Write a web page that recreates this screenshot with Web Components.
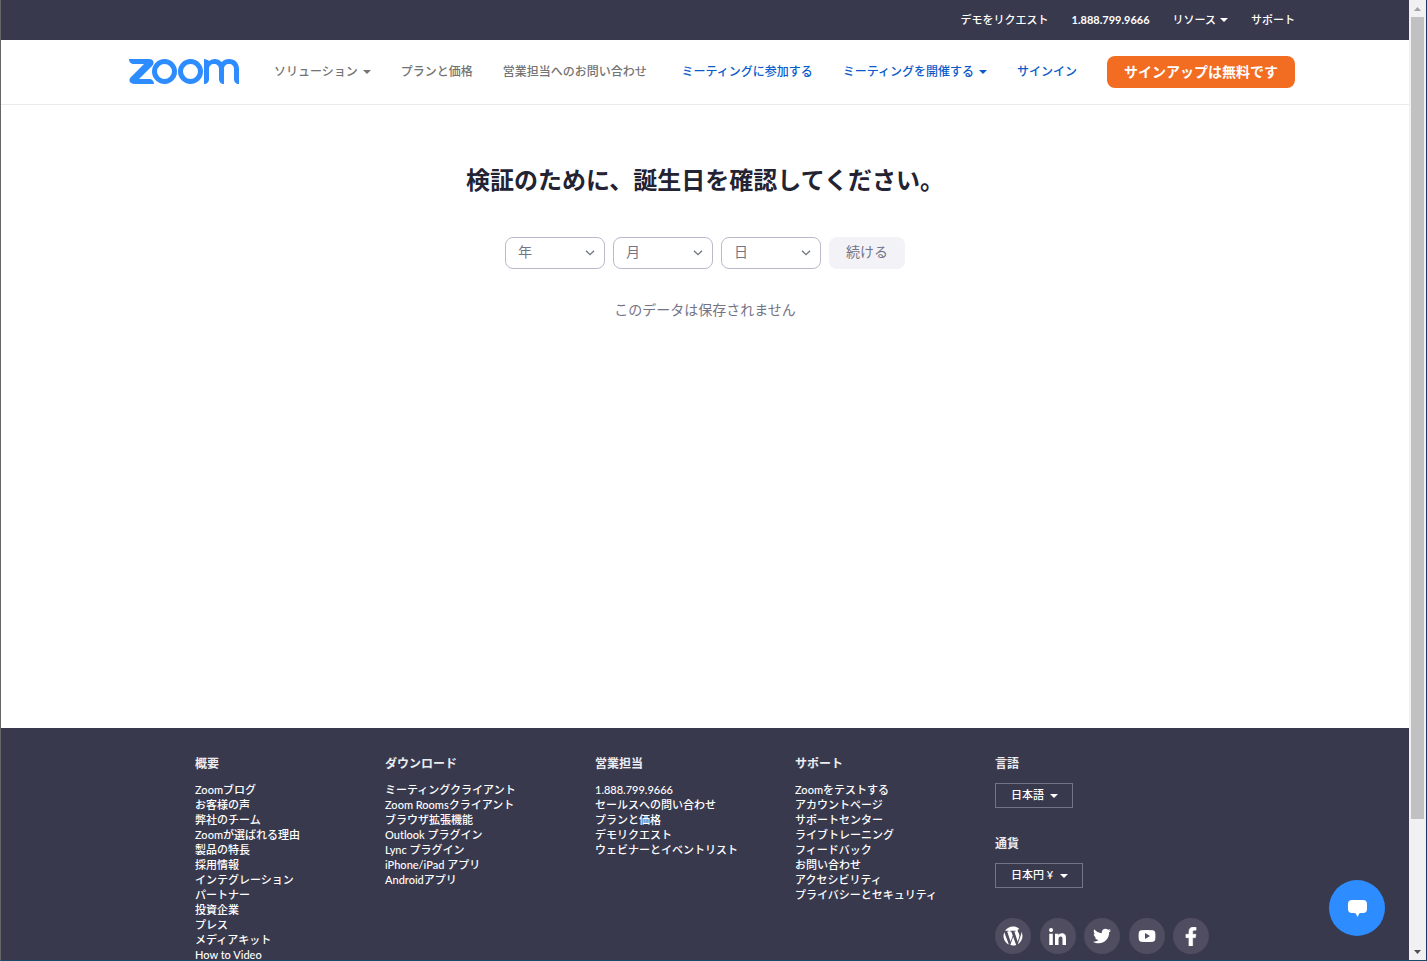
<!DOCTYPE html>
<html lang="ja">
<head>
<meta charset="utf-8">
<title>Zoom</title>
<style>
  html, body { margin: 0; height: 100%; }
  body {
    font-family: Lato, "Noto Sans CJK JP", sans-serif;
    font-size: 14px;
    line-height: 20px;
    color: #232333;
    background: #fff;
  }
</style>
</head>
<body>
<zm-window>
  <zm-topbar></zm-topbar>
  <zm-nav></zm-nav>
  <zm-birthday></zm-birthday>
  <zm-footer></zm-footer>
  <zm-chat slot="overlay"></zm-chat>
</zm-window>

<script>
const base = `:host,*,*::before,*::after{box-sizing:border-box} :host{display:block} a{color:inherit;text-decoration:none} button,select{font:inherit;margin:0}`;

function define(name, css, html) {
  customElements.define(name, class extends HTMLElement {
    constructor() {
      super();
      this.attachShadow({ mode: 'open' }).innerHTML =
        `<style>${base}${css}</style>${typeof html === 'function' ? html(this) : html}`;
    }
  });
}

/* Small filled triangle beside menu items */
define('zm-caret', `
  :host{display:inline-block;flex:none;width:8px;height:4px;color:inherit}
  svg{display:block;fill:currentColor}`,
  `<svg width="8" height="4" viewBox="0 0 8 4" aria-hidden="true"><path d="M0 0h8L4 4z"/></svg>`);

/* Browser window: page area on the left, scroll bar on the right */
define('zm-window', `
  :host{display:grid;grid-template-columns:minmax(0,1fr) 17px;height:100vh;
    border-left:1px solid #666;border-right:1px solid #1c3763;border-bottom:1px solid #1a4a69}
  .page{position:relative;overflow:hidden;display:flex;flex-direction:column}
  ::slotted(*){flex:none}`,
  `<div class="page"><slot></slot><slot name="overlay"></slot></div><zm-scrollbar></zm-scrollbar>`);

define('zm-scrollbar', `
  :host{display:flex;flex-direction:column;background:#f1f1f1}
  .end{height:17px;display:grid;place-items:center}
  .thumb{flex:802;margin:0 2px;background:#c1c1c1}
  .rest{flex:124}
  svg{display:block}`,
  `<div class="end"><svg width="7" height="4" viewBox="0 0 7 4" fill="#a3a3a3"><path d="M3.500 0L7 4H0z"/></svg></div>
   <div class="thumb"></div><div class="rest"></div>
   <div class="end"><svg width="7" height="4" viewBox="0 0 7 4" fill="#505050"><path d="M0 0h7L3.500 4z"/></svg></div>`);

define('zm-topbar', `
  :host{background:#39394d;color:#fff}
  nav{display:flex;justify-content:flex-end;gap:23px;height:40px;align-items:center;
    padding:0 114px 0 128px;font-size:11px;line-height:16px;font-weight:500}
  a{display:flex;align-items:center;gap:4px}
  a.phone{font-weight:700}`,
  `<nav aria-label="ユーティリティ">
    <a href="#">デモをリクエスト</a><a class="phone" href="tel:18887999666">1.888.799.9666</a>
    <a href="#">リソース<zm-caret></zm-caret></a><a href="#">サポート</a></nav>`);

define('zm-logo', `:host{flex:none} svg{display:block}`,
  `<svg width="110" height="26" viewBox="0 0 110 26" role="img" aria-label="Zoom" fill="#2d8cff">
    <path d="M0 0H20C24.500 0 26 4 23 7L10 20H20C23 20 25 22 25 25H5C.500 25-1 21 2 18L15 5H5C2 5 0 3 0 0Z"/>
    <circle cx="35.500" cy="12.500" r="10" fill="none" stroke="#2d8cff" stroke-width="5"/>
    <circle cx="61.500" cy="12.500" r="10" fill="none" stroke="#2d8cff" stroke-width="5"/>
    <path d="M75 0c2 0 4 1 5 2 2-1.300 4-2 5.500-2 3 0 5.500 1.200 7 3.200 2-2 4.500-3.200 7.500-3.200 6 0 10 4 10 10v15c-3 0-5-2-5-5V10c0-3-2-5-5-5s-5 2-5 5v15c-3 0-5-2-5-5V10c0-3-2-5-5-5s-5 2-5 5v10c0 3-2 5-5 5Z"/>
  </svg>`);

define('zm-nav', `
  :host{border-bottom:1px solid #ebebeb;background:#fff}
  header{display:flex;align-items:center;height:64px;padding:0 114px 0 128px;
    font-size:12px;line-height:18px;font-weight:500}
  nav{display:flex;align-items:center;gap:30px}
  nav.main{margin-left:35px;color:#747474}
  nav.account{margin-left:auto;color:#0b5cca}
  a{display:flex;align-items:center;gap:5px;white-space:nowrap}
  button{width:188px;height:32px;border:0;border-radius:8px;padding:0;background:#f26d21;color:#fff;
    font-size:14px;line-height:20px;font-weight:700}`,
  `<header><a href="#"><zm-logo></zm-logo></a>
    <nav class="main" aria-label="メイン"><a href="#">ソリューション<zm-caret></zm-caret></a><a href="#">プランと価格</a><a href="#">営業担当へのお問い合わせ</a></nav>
    <nav class="account" aria-label="アカウント"><a href="#">ミーティングに参加する</a><a href="#">ミーティングを開催する<zm-caret></zm-caret></a><a href="#">サインイン</a><button type="button">サインアップは無料です</button></nav>
  </header>`);

/* Rounded drop-down for one part of a date */
define('zm-date-select', `
  :host{display:grid;width:100px}
  select,svg{grid-area:1/1}
  select{appearance:none;width:100%;height:32px;border:1px solid #babacc;border-radius:8px;background:#fff;
    padding:0 28px 2px 12px;color:#747487;font-size:14px;line-height:20px}
  svg{align-self:center;justify-self:end;margin-right:10px;pointer-events:none}`,
  el => `<select aria-label="${el.getAttribute('label')}"><option>${el.getAttribute('label')}</option></select>
    <svg width="10" height="6" viewBox="0 0 10 6" fill="none" stroke="#6e7680" stroke-width="1.300"><path d="M1 .7L5 4.700 9 .7"/></svg>`);

define('zm-birthday', `
  main{display:flex;flex-direction:column;align-items:center;min-height:623px;padding-top:58px}
  h1{margin:0;font-size:24px;line-height:34px;font-weight:700;color:#232333}
  form{display:flex;gap:8px;margin-top:40px}
  button{width:76px;height:32px;border:0;border-radius:8px;padding:0 0 2px;background:#f2f2f7;color:#747487;font-size:14px;line-height:20px}
  p{margin:31px 0 0;color:#747487}`,
  `<main><h1>検証のために、誕生日を確認してください。</h1>
    <form><zm-date-select label="年"></zm-date-select><zm-date-select label="月"></zm-date-select><zm-date-select label="日"></zm-date-select><button type="button">続ける</button></form>
    <p>このデータは保存されません</p></main>`);

/* Titled list of footer links; the links are passed in */
define('zm-links', `
  h2{margin:0 0 9px;font-size:12px;line-height:18px;font-weight:700;color:#ececf0}
  div{display:flex;flex-direction:column;align-items:flex-start;font-size:11px;line-height:15px;font-weight:500}
  ::slotted(a){color:#fff;text-decoration:none;white-space:nowrap}`,
  el => `<h2>${el.getAttribute('heading')}</h2><div><slot></slot></div>`);

define('zm-footer-select', `
  label{display:block;font-size:12px;line-height:18px;font-weight:700;color:#ececf0}
  div{display:inline-grid;margin-top:10px}
  select,zm-caret{grid-area:1/1}
  select{appearance:none;height:25px;border:1px solid #747487;border-radius:0;background:transparent;color:#fff;
    padding:0 28px 1px 15px;font-size:11px;line-height:16px;font-weight:500}
  zm-caret{align-self:center;justify-self:end;margin-right:15px;pointer-events:none}`,
  el => `<label for="s">${el.getAttribute('label')}</label>
    <div><select id="s"><option>${el.getAttribute('value')}</option></select><zm-caret></zm-caret></div>`);

define('zm-social', `
  :host{display:flex;justify-content:space-between;width:214px}
  a{display:grid;place-items:center;width:36px;height:36px;border-radius:50%;background:#4f4d5f}
  svg{display:block;fill:#fff}`,
  `<a href="#" aria-label="WordPress"><svg width="20" height="20" viewBox="32 32 448 448"><path d="M61.7 169.4l101.5 278C92.2 413 43.3 340.2 43.3 256c0-30.9 6.6-60.1 18.4-86.6zm337.9 75.9c0-26.3-9.4-44.5-17.5-58.7-10.8-17.5-20.9-32.4-20.9-49.9 0-19.6 14.8-37.8 35.7-37.8.9 0 1.8.1 2.8.2-37.9-34.7-88.3-55.9-143.7-55.9-74.3 0-139.7 38.1-177.8 95.9 5 .2 9.7.3 13.700.3 22.200 0 56.700-2.700 56.700-2.700 11.500-.7 12.800 16.200 1.400 17.500 0 0-11.500 1.300-24.300 2l77.500 230.400L249.800 247l-33.100-90.800c-11.500-.7-22.300-2-22.300-2-11.500-.7-10.100-18.200 1.300-17.500 0 0 35.100 2.700 56 2.700 22.200 0 56.700-2.700 56.700-2.700 11.500-.7 12.800 16.200 1.400 17.500 0 0-11.500 1.300-24.300 2l76.900 228.700 21.200-70.900c9-29.400 16-50.500 16-68.700zm-139.900 29.300l-63.800 185.500c19.100 5.600 39.200 8.700 60.100 8.700 24.800 0 48.500-4.300 70.600-12.100-.6-.9-1.100-1.900-1.500-2.900l-65.400-179.200zm183-120.700c.9 6.800 1.400 14 1.400 21.900 0 21.600-4 45.800-16.200 76.200l-65 187.900C426.200 403 468.700 334.500 468.700 256c0-37-9.400-71.800-26-102.100z"/></svg></a>
   <a href="#" aria-label="LinkedIn"><svg width="17" height="17" viewBox="0 0 448 448"><path d="M100.280 448H7.400V148.900h92.880zM53.790 108.100C24.090 108.100 0 83.500 0 53.800a53.790 53.790 0 0 1 107.580 0c0 29.700-24.100 54.300-53.790 54.300zM447.900 448h-92.680V302.400c0-34.700-.7-79.200-48.290-79.200-48.290 0-55.690 37.700-55.690 76.700V448h-92.780V148.900h89.080v40.800h1.300c12.400-23.500 42.690-48.300 87.880-48.300 94 0 111.280 61.900 111.280 142.300V448z"/></svg></a>
   <a href="#" aria-label="Twitter"><svg width="18" height="18" viewBox="0 0 512 512"><path d="M459.370 151.716c.325 4.548.325 9.097.325 13.645 0 138.720-105.583 298.558-298.558 298.558-59.452 0-114.680-17.219-161.137-47.106 8.447.974 16.568 1.299 25.340 1.299 49.055 0 94.213-16.568 130.274-44.832-46.132-.975-84.792-31.188-98.112-72.772 6.498.974 12.995 1.624 19.818 1.624 9.421 0 18.843-1.300 27.614-3.573-48.081-9.747-84.143-51.980-84.143-102.985v-1.299c13.969 7.797 30.214 12.670 47.431 13.319-28.264-18.843-46.781-51.005-46.781-87.391 0-19.492 5.197-37.360 14.294-52.954 51.655 63.675 129.300 105.258 216.365 109.807-1.624-7.797-2.599-15.918-2.599-24.040 0-57.828 46.782-104.934 104.934-104.934 30.213 0 57.502 12.670 76.670 33.137 23.715-4.548 46.456-13.320 66.599-25.340-7.798 24.366-24.366 44.833-46.132 57.827 21.117-2.273 41.584-8.122 60.426-16.243-14.292 20.791-32.161 39.308-52.628 54.253z"/></svg></a>
   <a href="#" aria-label="YouTube"><svg width="18" height="12" viewBox="0 0 18 12"><path fill-rule="evenodd" d="M3 .3Q9-.3 15 .3 17 .5 17.200 2.500 17.600 6 17.200 9.500 17 11.500 15 11.700 9 12.300 3 11.700 1 11.500.8 9.500.4 6 .8 2.500 1 .5 3 .3zM7 3v6l5-3z"/></svg></a>
   <a href="#" aria-label="Facebook"><svg width="12" height="19" viewBox="0 0 320 512"><path d="M279.140 288l14.220-92.660h-88.910v-60.130c0-25.350 12.420-50.060 52.240-50.060h40.420V6.260S260.430 0 225.360 0c-73.220 0-121.080 44.380-121.080 124.720v70.620H22.890V288h81.390v224h100.170V288z" stroke="#fff" stroke-width="14"/></svg></a>`);

const columns = [
  ['概要', ['Zoomブログ', 'お客様の声', '弊社のチーム', 'Zoomが選ばれる理由', '製品の特長', '採用情報', 'インテグレーション', 'パートナー', '投資企業', 'プレス', 'メディアキット', 'How to Video']],
  ['ダウンロード', ['ミーティングクライアント', 'Zoom Roomsクライアント', 'ブラウザ拡張機能', 'Outlook プラグイン', 'Lync プラグイン', 'iPhone/iPad アプリ', 'Androidアプリ']],
  ['営業担当', ['1.888.799.9666', 'セールスへの問い合わせ', 'プランと価格', 'デモリクエスト', 'ウェビナーとイベントリスト']],
  ['サポート', ['Zoomをテストする', 'アカウントページ', 'サポートセンター', 'ライブトレーニング', 'フィードバック', 'お問い合わせ', 'アクセシビリティ', 'プライバシーとセキュリティ']]
];

define('zm-footer', `
  :host{background:#39394d;color:#fff}
  footer{display:grid;grid-template-columns:190px 210px 200px 200px 1fr;max-width:1020px;margin:0 auto;padding:27px 0 40px}
  .side{display:flex;flex-direction:column;gap:27px}
  zm-social{margin-top:3px}`,
  `<footer>${columns.map(([h, links]) =>
      `<zm-links heading="${h}">${links.map(t => `<a href="#">${t}</a>`).join('')}</zm-links>`).join('')}
    <div class="side"><zm-footer-select label="言語" value="日本語"></zm-footer-select>
      <zm-footer-select label="通貨" value="日本円 ¥"></zm-footer-select><zm-social></zm-social></div></footer>`);

/* Floating chat launcher, over the page's lower right corner */
define('zm-chat', `
  :host{position:absolute;right:24px;bottom:24px}
  button{display:grid;place-items:center;width:56px;height:56px;border:0;border-radius:50%;padding:0;background:#2d8cff}
  svg{display:block}`,
  `<button type="button" aria-label="チャット"><svg width="19" height="17" viewBox="0 0 19 17" fill="#fff"><path d="M4 0h11q4 0 4 4v5q0 4-4 4h-2.500q-1 0-1.500 1L9.500 17 8 14q-.5-1-1.500-1H4q-4 0-4-4V4q0-4 4-4z"/></svg></button>`);
</script>
</body>
</html>
